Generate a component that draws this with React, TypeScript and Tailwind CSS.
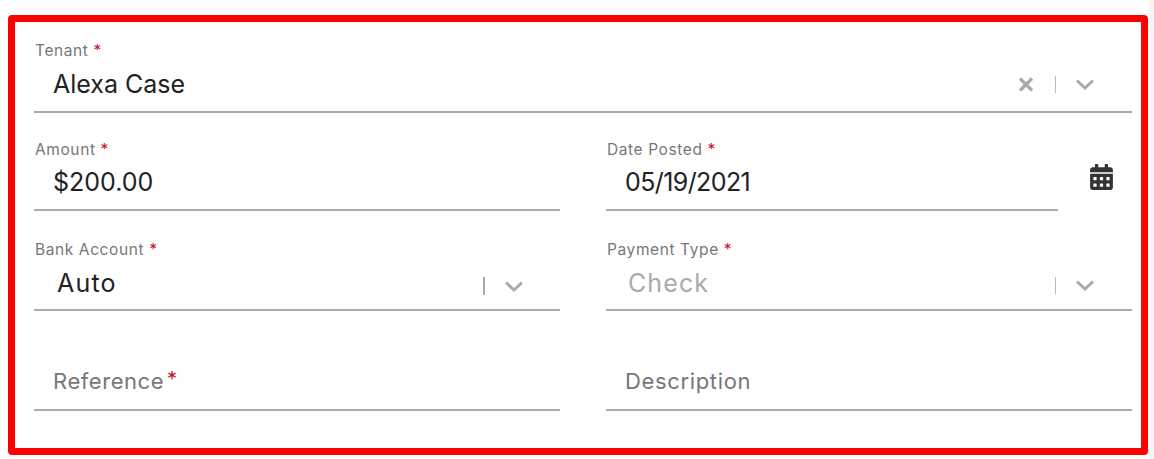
import { FaCalendarAlt } from "react-icons/fa";

function Star() {
  return <span className="text-[#c8102e]"> *</span>;
}

function Clear() {
  return (
    <svg width="16" height="17" viewBox="0 0 16 17" className="block">
      <path d="M2 2.5 14 14.5M14 2.5 2 14.5" stroke="#aaaaaa" strokeWidth="3.4" fill="none" />
    </svg>
  );
}

function Chevron() {
  return (
    <svg width="20" height="13" viewBox="0 0 20 13" className="block">
      <path d="M2 2.5 10 10 18 2.5" stroke="#aaaaaa" strokeWidth="3" fill="none" />
    </svg>
  );
}

function Field({ label, value, muted, pad = "pl-[19px]", top = "pt-[7px]", height = "h-[70px]", track = "tracking-normal", labelTop = "", children }: {
  label?: string;
  value: React.ReactNode;
  muted?: boolean;
  pad?: string;
  top?: string;
  height?: string;
  track?: string;
  labelTop?: string;
  children?: React.ReactNode;
}) {
  return (
    <div className={`flex ${height} flex-1 flex-col border-b-2 border-[#aaaaaa]`}>
      <div className={`h-[15px] pl-px text-[15.5px] leading-[15px] tracking-[0.6px] text-[#777777] ${labelTop}`}>
        {label ? <>{label}<Star /></> : null}
      </div>
      <div className={`flex flex-1 items-start ${top} ${pad}`}>
        <div className={`flex-1 text-[25px] leading-[36px] ${track} ${muted ? "text-[#aaaaaa]" : "text-[#222222]"}`}>
          {value}
        </div>
        {children}
      </div>
    </div>
  );
}

export default function App() {
  return (
    <div className="flex h-[459px] w-[1154px] bg-white font-['Inter',sans-serif]">
      <div className="w-[1149px] pl-2 pt-[15px]">
        <div className="h-[440px] w-[1140px] rounded-[4px] border-[7px] border-[#ff0000] pl-[19px] pr-[10px] pt-[21px]">
          <div className="grid grid-cols-[526px_526px] gap-x-[46px] gap-y-[30px]">
            <div className="col-span-2 mb-[-1px]">
              <Field label="Tenant" value="Alexa Case" top="pt-[8px]">
                <div className="flex items-center pt-[10px] pr-[37px]">
                  <Clear />
                  <div className="ml-[21px] h-[17px] w-px bg-[#bbbbbb]" />
                  <div className="ml-[19px]"><Chevron /></div>
                </div>
              </Field>
            </div>
            <Field label="Amount" value="$200.00" height="h-[69px]" />
            <div className="flex">
              <div className="w-[452px]">
                <Field label="Date Posted" value="05/19/2021" height="h-[69px]" track="tracking-[-0.6px]" />
              </div>
              <div className="pl-[32px] pt-[22px]">
                <FaCalendarAlt className="h-[26px] w-[23px] text-[#333333]" />
              </div>
            </div>
            <Field label="Bank Account" labelTop="pt-px" value="Auto" pad="pl-[23px]" top="pt-[9px]" track="tracking-[1.2px]">
              <div className="flex items-center pt-[12px] pr-[36px]">
                <div className="h-[18px] w-[2px] bg-[#aaaaaa]" />
                <div className="ml-[19px]"><Chevron /></div>
              </div>
            </Field>
            <Field label="Payment Type" labelTop="pt-px" value="Check" muted top="pt-[9px]" pad="pl-[22px]" track="tracking-[1.1px]">
              <div className="flex items-center pt-[12px] pr-[37px]">
                <div className="h-[17px] w-px bg-[#bbbbbb]" />
                <div className="ml-[19px]"><Chevron /></div>
              </div>
            </Field>
            <Field top="pt-[6px]" track="tracking-[0.55px]" value={
              <span className="text-[22px] text-[#777777]">Reference<span className="relative top-[-3px] ml-[3px] text-[20px] tracking-normal text-[#c8102e]">*</span></span>
            } />
            <Field top="pt-[6px]" track="tracking-[0.65px]" value={<span className="text-[22px] text-[#777777]">Description</span>} />
          </div>
        </div>
      </div>
      <div className="w-[5px] bg-[#f6f6f6]" />
    </div>
  );
}
